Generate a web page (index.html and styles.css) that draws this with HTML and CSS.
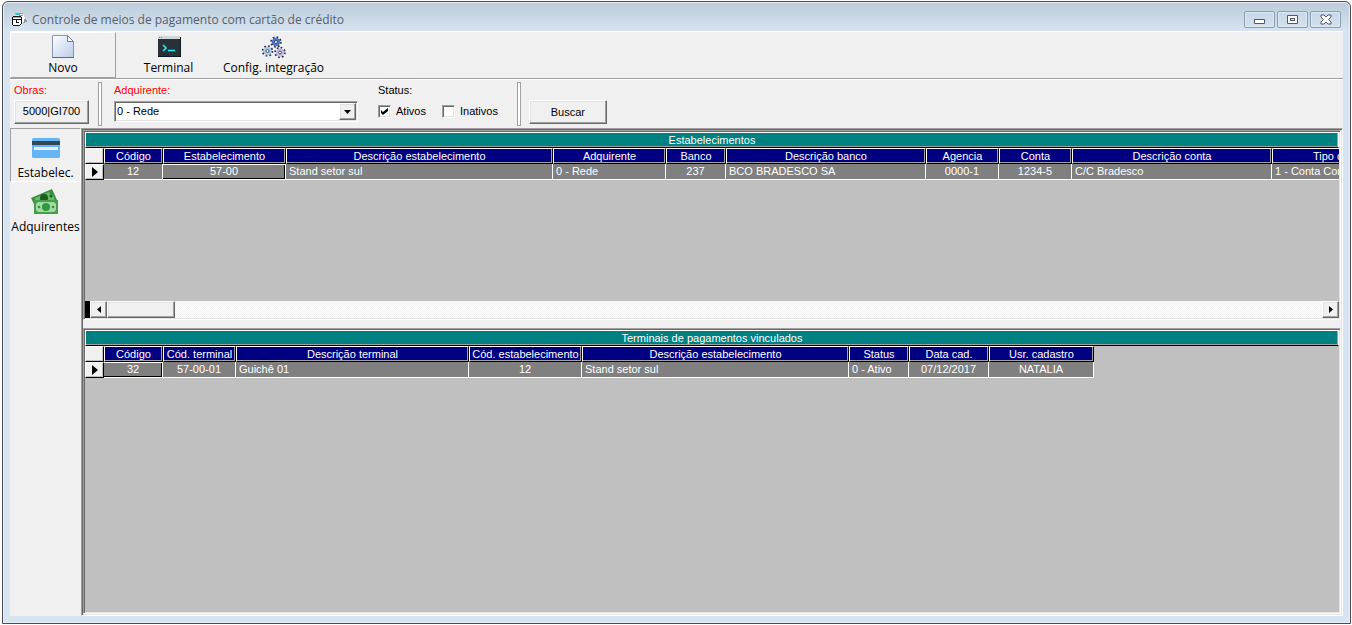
FILE: index.html
```html
<!DOCTYPE html>
<html lang="pt-BR">
<head>
<meta charset="utf-8">
<title>Controle de meios de pagamento com cartão de crédito</title>
<link rel="stylesheet" href="styles.css">
</head>
<body>
<div class="window">
  <header class="titlebar">
    <svg class="app-icon" width="16" height="14" viewBox="0 0 16 14" shape-rendering="crispEdges" aria-hidden="true">
      <path d="M4 1h7v1h1v2h1v2h1v3h-2v1H9V5H4z" fill="#fff"/>
      <path d="M3 0h8v1H3z" fill="#8b97a3"/>
      <path d="M4 1h4v1h3v1H7V2H4z" fill="#20c8c8"/>
      <path d="M12 6h2v1h1v2h-2v1h-2V9h1z" fill="#8b97a3"/>
      <path d="M1 3h8v10H1z" fill="#fff"/>
      <path d="M1 3h8v1H1zM0 4h1v8H0zM9 4h1v7H9zM1 12h7v1H1zM8 11h1v1H8zM1 6h8v1H1zM4 7h1v3H4zM4 9h3v1H4z" fill="#111"/>
      <path d="M1 4h8v1H1z" fill="#20e0e0"/>
    </svg>
    <h1 class="title">Controle de meios de pagamento com cartão de crédito</h1>
    <div class="window-controls">
      <button class="window-button" type="button" aria-label="Minimizar">
        <svg width="12" height="11" viewBox="0 0 12 11"><rect x="0" y="5" width="11" height="5" rx="1" fill="#535666"/><path d="M1 6h9v3H1z" fill="#fff"/></svg>
      </button>
      <button class="window-button" type="button" aria-label="Maximizar">
        <svg width="12" height="11" viewBox="0 0 12 11"><rect x="0" y="1" width="11" height="9" rx="1" fill="#535666"/><path d="M1 2h9v7H1z" fill="#fff"/><path d="M3 4h5v3H3z" fill="#535666"/><path d="M4 5h3v1H4z" fill="#dbe7f3"/></svg>
      </button>
      <button class="window-button" type="button" aria-label="Fechar">
        <svg width="12" height="11" viewBox="0 0 12 11"><path d="M1 1h3l2 2 2-2h3v2L8.500 5.500 11 8v2H8L6 8l-2 2H1V8l2.500-2.500L1 3z" fill="#fff" stroke="#535666"/></svg>
      </button>
    </div>
  </header>

  <main class="client">
    <nav class="toolbar" aria-label="Ações">
      <button class="tool tool-active" type="button">
        <svg width="24" height="26" viewBox="0 0 24 26" aria-hidden="true">
          <defs><linearGradient id="paper" x1="0" y1="0" x2="1" y2="1"><stop offset="0" stop-color="#fff"/><stop offset=".4" stop-color="#e2eaf7"/><stop offset="1" stop-color="#b9cae8"/></linearGradient></defs>
          <path d="M1.500 1.500h15l6 6v16h-21z" fill="url(#paper)" stroke="#8795b5"/>
          <path d="M16.500 1.500v6h6z" fill="#fff" stroke="#6f7d9b"/>
          <path d="M1 23.500h22" stroke="#5c6884"/>
        </svg>
        <span>Novo</span>
      </button>
      <button class="tool" type="button">
        <svg width="24" height="26" viewBox="0 0 24 26" aria-hidden="true">
          <path d="M1 2h22v4H1z" fill="#d3d6d8"/><path d="M2 3h1v1H2zM4 3h1v1H4z" fill="#888"/>
          <path d="M1 5h22v18H1z" fill="#263238"/><path d="M1 23h23V3h-1v19H1z" fill="#10181c"/>
          <path d="M6 11l3 3-3 3M11 16.500h7" fill="none" stroke="#18f0ff" stroke-width="1.600"/>
        </svg>
        <span>Terminal</span>
      </button>
      <button class="tool" type="button">
        <svg width="26" height="26" viewBox="0 0 26 26" aria-hidden="true">
          <g fill="none">
            <circle cx="15" cy="8" r="4.500" stroke="#25304a" stroke-width="2.500" stroke-dasharray="1.600 1.930"/>
            <circle cx="15" cy="8" r="3" fill="#6c93d6" stroke="#4f78c4" stroke-width="2.400"/>
            <circle cx="6.500" cy="17" r="4.500" stroke="#25304a" stroke-width="2.500" stroke-dasharray="1.600 1.930"/>
            <circle cx="6.500" cy="17" r="3" fill="#eef6fc" stroke="#a9cbe4" stroke-width="2.400"/>
            <circle cx="19" cy="18.500" r="4.500" stroke="#25304a" stroke-width="2.500" stroke-dasharray="1.600 1.930"/>
            <circle cx="19" cy="18.500" r="3" fill="#f1eafa" stroke="#cabbe4" stroke-width="2.400"/>
          </g>
          <g fill="#fff" stroke="#3c4663"><circle cx="15" cy="8" r="1.500"/><circle cx="6.500" cy="17" r="1.500"/><circle cx="19" cy="18.500" r="1.500"/></g>
        </svg>
        <span>Config. integração</span>
      </button>
    </nav>

    <form class="filters">
      <div class="field">
        <label class="caption required" for="obras">Obras:</label>
        <div class="control"><button class="button button-works" id="obras" type="button">5000|GI700</button></div>
      </div>
      <div class="separator"></div>
      <div class="field">
        <label class="caption required" for="adquirente">Adquirente:</label>
        <div class="control">
          <div class="combo">
            <select id="adquirente"><option>0 - Rede</option></select>
            <span class="combo-arrow" aria-hidden="true"><svg width="7" height="4" viewBox="0 0 7 4"><path d="M0 0h7L3.500 4z"/></svg></span>
          </div>
        </div>
      </div>
      <div class="field status" role="group" aria-labelledby="status-caption">
        <span class="caption" id="status-caption">Status:</span>
        <div class="control checks">
          <label class="check"><input type="checkbox" checked>Ativos</label>
          <label class="check"><input type="checkbox">Inativos</label>
        </div>
      </div>
      <div class="separator"></div>
      <button class="button button-search" type="button">Buscar</button>
    </form>

    <div class="workspace">
      <nav class="sidebar" aria-label="Seções">
        <button class="side-item side-active" type="button">
          <svg width="32" height="32" viewBox="0 0 32 32" aria-hidden="true">
            <rect x="2" y="6" width="28" height="20" rx="1.500" fill="#64b5f6"/>
            <path d="M2 9h28v4H2z" fill="#37474f"/><path d="M4 15h24v3H4z" fill="#e3f2fd"/>
          </svg>
          <span>Estabelec.</span>
        </button>
        <button class="side-item" type="button">
          <svg width="32" height="32" viewBox="0 0 32 32" aria-hidden="true">
            <path d="M1 12L22 3l5 11v4H4z" fill="#388e3c"/>
            <path d="M5 12l14-6 1 2 3 1 2 5H5z" fill="#66bb6a"/>
            <circle cx="14" cy="12" r="4" fill="#1b5e20"/><circle cx="21" cy="10" r="1.500" fill="#1b5e20"/>
            <path d="M4 14h24v14H4z" fill="#43a047"/>
            <path d="M8 16h16l2 2v6l-2 2H8l-2-2v-6z" fill="#a5d6a7"/>
            <circle cx="16" cy="21" r="4" fill="#2e9b3b"/><circle cx="9" cy="21" r="1.300" fill="#2e9b3b"/><circle cx="23" cy="21" r="1.300" fill="#2e9b3b"/>
          </svg>
          <span>Adquirentes</span>
        </button>
      </nav>

      <div class="grids sunken">
        <section class="grid grid-top sunken">
          <h2 class="grid-title">Estabelecimentos</h2>
          <div class="grid-body">
            <table>
              <colgroup><col class="w19"><col class="w59"><col class="w123"><col class="w267"><col class="w113"><col class="w60"><col class="w200"><col class="w73"><col class="w73"><col class="w200"><col class="w148"></colgroup>
              <thead><tr><th class="marker"></th><th>Código</th><th>Estabelecimento</th><th>Descrição estabelecimento</th><th>Adquirente</th><th>Banco</th><th>Descrição banco</th><th>Agencia</th><th>Conta</th><th>Descrição conta</th><th>Tipo de conta</th></tr></thead>
              <tbody><tr><td class="marker"><svg width="6" height="10" viewBox="0 0 6 10"><path d="M0 0l6 5-6 5z"/></svg></td><td>12</td><td class="current">57-00</td><td class="text">Stand setor sul</td><td class="text">0 - Rede</td><td>237</td><td class="text">BCO BRADESCO SA</td><td>0000-1</td><td>1234-5</td><td class="text">C/C Bradesco</td><td class="text">1 - Conta Corrente</td></tr></tbody>
            </table>
          </div>
          <div class="scrollbar">
            <span class="split"></span>
            <button class="scroll-arrow" type="button" aria-label="Rolar para a esquerda"><svg width="4" height="7" viewBox="0 0 4 7"><path d="M4 0v7L0 3.500z"/></svg></button>
            <span class="track"><span class="thumb"></span></span>
            <button class="scroll-arrow" type="button" aria-label="Rolar para a direita"><svg width="4" height="7" viewBox="0 0 4 7"><path d="M0 0v7l4-3.500z"/></svg></button>
          </div>
        </section>

        <section class="grid grid-bottom sunken">
          <h2 class="grid-title">Terminais de pagamentos vinculados</h2>
          <div class="grid-body">
            <table>
              <colgroup><col class="w19"><col class="w59"><col class="w73"><col class="w233"><col class="w113"><col class="w267"><col class="w60"><col class="w80"><col class="w105"></colgroup>
              <thead><tr><th class="marker"></th><th>Código</th><th>Cód. terminal</th><th>Descrição terminal</th><th>Cód. estabelecimento</th><th>Descrição estabelecimento</th><th>Status</th><th>Data cad.</th><th>Usr. cadastro</th></tr></thead>
              <tbody><tr><td class="marker"><svg width="6" height="10" viewBox="0 0 6 10"><path d="M0 0l6 5-6 5z"/></svg></td><td class="current">32</td><td>57-00-01</td><td class="text">Guichê 01</td><td>12</td><td class="text">Stand setor sul</td><td class="text">0 - Ativo</td><td>07/12/2017</td><td>NATALIA</td></tr></tbody>
            </table>
          </div>
        </section>
      </div>
    </div>
  </main>
</div>
</body>
</html>
```
FILE: styles.css
```css
* { box-sizing: border-box; }

body {
  margin: 0;
  background: #fff;
  color: #000;
  font: 11px/13px "Liberation Sans", Arial, sans-serif;
}

button, select, input { font: inherit; color: inherit; margin: 0; }
svg { display: block; flex: none; }

/* Window frame */
.window {
  display: flex;
  flex-direction: column;
  min-height: calc(100vh - 2px);
  margin: 1px 1px 1px 2px;
  padding: 0 7px 7px;
  border: 1px solid #4b4a50;
  border-radius: 6px 6px 0 0;
  background: #d7e4f2 linear-gradient(#bccbd9, #d7e4f2) no-repeat 0 0 / 100% 30px;
  box-shadow: inset 0 0 0 1px #e6eef7;
}

.titlebar {
  display: flex;
  align-items: center;
  gap: 4px;
  height: 29px;
  padding: 6px 2px 0;
}

.title {
  flex: 1;
  margin: 0;
  color: #56606c;
  font: 12px/16px "Open Sans", "Noto Sans", sans-serif;
}

.window-controls { display: flex; gap: 2px; }

.window-button {
  display: grid;
  place-items: center;
  width: 31px;
  height: 17px;
  padding: 0;
  border: 1px solid #8c9db2;
  border-radius: 2px;
  background: linear-gradient(#c9d8e6, #d3e0ed);
  box-shadow: inset 0 0 0 1px #dfe9f3;
}

.client {
  display: flex;
  flex: 1;
  flex-direction: column;
  background: #f0f0f0;
}

/* Toolbar */
.toolbar {
  display: flex;
  height: 48px;
  border-top: 1px solid #fff;
  border-bottom: 1px solid #a0a0a0;
}

.tool, .side-item {
  display: flex;
  flex-direction: column;
  align-items: center;
  padding: 0;
  border: 1px solid transparent;
  background: none;
  font: 12px/16px "Open Sans", "Noto Sans", sans-serif;
  white-space: nowrap;
}

.tool { width: 105px; padding-top: 1px; }
.tool-active { width: 106px; border-color: #fff #a0a0a0 #a0a0a0 #fff; }

/* Filters */
.filters {
  display: flex;
  align-items: flex-start;
  height: 49px;
  padding: 2px 4px;
  border-top: 1px solid #fff;
}

.field { display: flex; flex-direction: column; gap: 3px; padding-top: 2px; }
.caption { line-height: 13px; }
.required { color: #f00; }
.control { display: flex; align-items: center; height: 23px; }

.separator {
  width: 4px;
  height: 44px;
  margin: 0 12px 0 9px;
  border: 1px solid #a0a0a0;
  background: #fff;
}

.button, .scroll-arrow, .combo-arrow, .thumb {
  border: 1px solid;
  border-color: #fff #696969 #696969 #fff;
  background: #f0f0f0;
  box-shadow: inset -1px -1px #a0a0a0, inset 1px 1px #e3e3e3;
}

.button { height: 24px; padding: 0; border-radius: 0; }
.button-works { width: 75px; }
.button-search { width: 78px; margin: 18px 0 0 -4px; }

.combo {
  display: flex;
  width: 244px;
  height: 21px;
  padding: 1px;
  border: 1px solid;
  border-color: #a0a0a0 #fff #fff #a0a0a0;
  background: #fff;
  box-shadow: inset 1px 1px #696969, inset -1px -1px #e3e3e3;
}

.combo select {
  flex: 1;
  appearance: none;
  padding: 0 1px;
  border: 0;
  background: none;
}

.combo-arrow { display: grid; place-items: center; width: 17px; }

.status { margin: 0 10px 0 20px; }
.checks { gap: 16px; }
.check { display: flex; align-items: center; gap: 5px; }

.check input {
  display: grid;
  place-items: center;
  width: 13px;
  height: 13px;
  appearance: none;
  border: 1px solid;
  border-color: #a0a0a0 #fff #fff #a0a0a0;
  background: #fff;
  box-shadow: inset 1px 1px #696969, inset -1px -1px #e3e3e3;
}

.check input:checked::after {
  content: "";
  width: 7px;
  height: 7px;
  background: #000;
  clip-path: polygon(0 28%, 28% 57%, 100% 0, 100% 43%, 28% 100%, 0 71%);
}

/* Sidebar and grids */
.workspace { display: flex; flex: 1; }
.sidebar { display: flex; flex-direction: column; width: 71px; }
.side-item { height: 54px; padding-top: 3px; gap: 1px; }
.side-active { border-color: #a0a0a0 #fff #fff #a0a0a0; }

.sunken {
  padding: 1px;
  border: 1px solid;
  border-color: #a0a0a0 #fff #fff #a0a0a0;
  box-shadow: inset 1px 1px #696969, inset -1px -1px #e3e3e3;
}

.grids {
  display: flex;
  flex: 1;
  flex-direction: column;
  gap: 8px;
  min-width: 0;
}

.grid { display: flex; flex-direction: column; background: #c0c0c0; }
.grid-top { flex: 188 1 0; }
.grid-bottom { flex: 286 1 0; }

.grid-title {
  height: 16px;
  margin: 0;
  border: 1px solid;
  border-color: #fff #fff #000 #fff;
  background: #008080;
  box-shadow: inset -1px -1px #a0a0a0;
  color: #fff;
  font: 11px/14px "Liberation Sans", Arial, sans-serif;
  text-align: center;
}

.grid-body { flex: 1; overflow: hidden; }

table {
  width: 0;
  table-layout: fixed;
  border-collapse: separate;
  border-spacing: 0;
}

th, td {
  height: 16px;
  padding: 0;
  overflow: hidden;
  color: #fff;
  font-weight: normal;
  line-height: 14px;
  text-align: center;
  white-space: nowrap;
}

th {
  border: 1px solid;
  border-color: #fff #000 #000 #fff;
  background: #000080;
  box-shadow: inset -1px -1px #a0a0a0;
}

td {
  border-right: 1px solid #fff;
  border-bottom: 1px solid #fff;
  background: #808080;
  line-height: 14px;
  vertical-align: top;
}

td.text { padding-left: 3px; text-align: left; }
td.current { box-shadow: inset 0 1px #fff, inset -1px -1px #000; }

th.marker, td.marker {
  border: 1px solid;
  border-color: #fff #000 #000 #fff;
  background: #f0f0f0;
  box-shadow: inset -1px -1px #c0c0c0;
  vertical-align: middle;
}

td.marker svg { margin: 0 auto; }

.w19 { width: 19px; }
.w59 { width: 59px; }
.w60 { width: 60px; }
.w73 { width: 73px; }
.w80 { width: 80px; }
.w105 { width: 105px; }
.w113 { width: 113px; }
.w123 { width: 123px; }
.w148 { width: 148px; }
.w200 { width: 200px; }
.w233 { width: 233px; }
.w267 { width: 267px; }

/* Horizontal scroll bar */
.scrollbar { display: flex; height: 17px; }
.split { width: 5px; background: #000; }

.scroll-arrow {
  display: grid;
  place-items: center;
  width: 17px;
  padding: 0;
}

.track {
  display: flex;
  flex: 1;
  background: repeating-conic-gradient(#fff 0 25%, #f0f0f0 0 50%) 0 0 / 2px 2px;
}

.thumb { width: 68px; }
```
